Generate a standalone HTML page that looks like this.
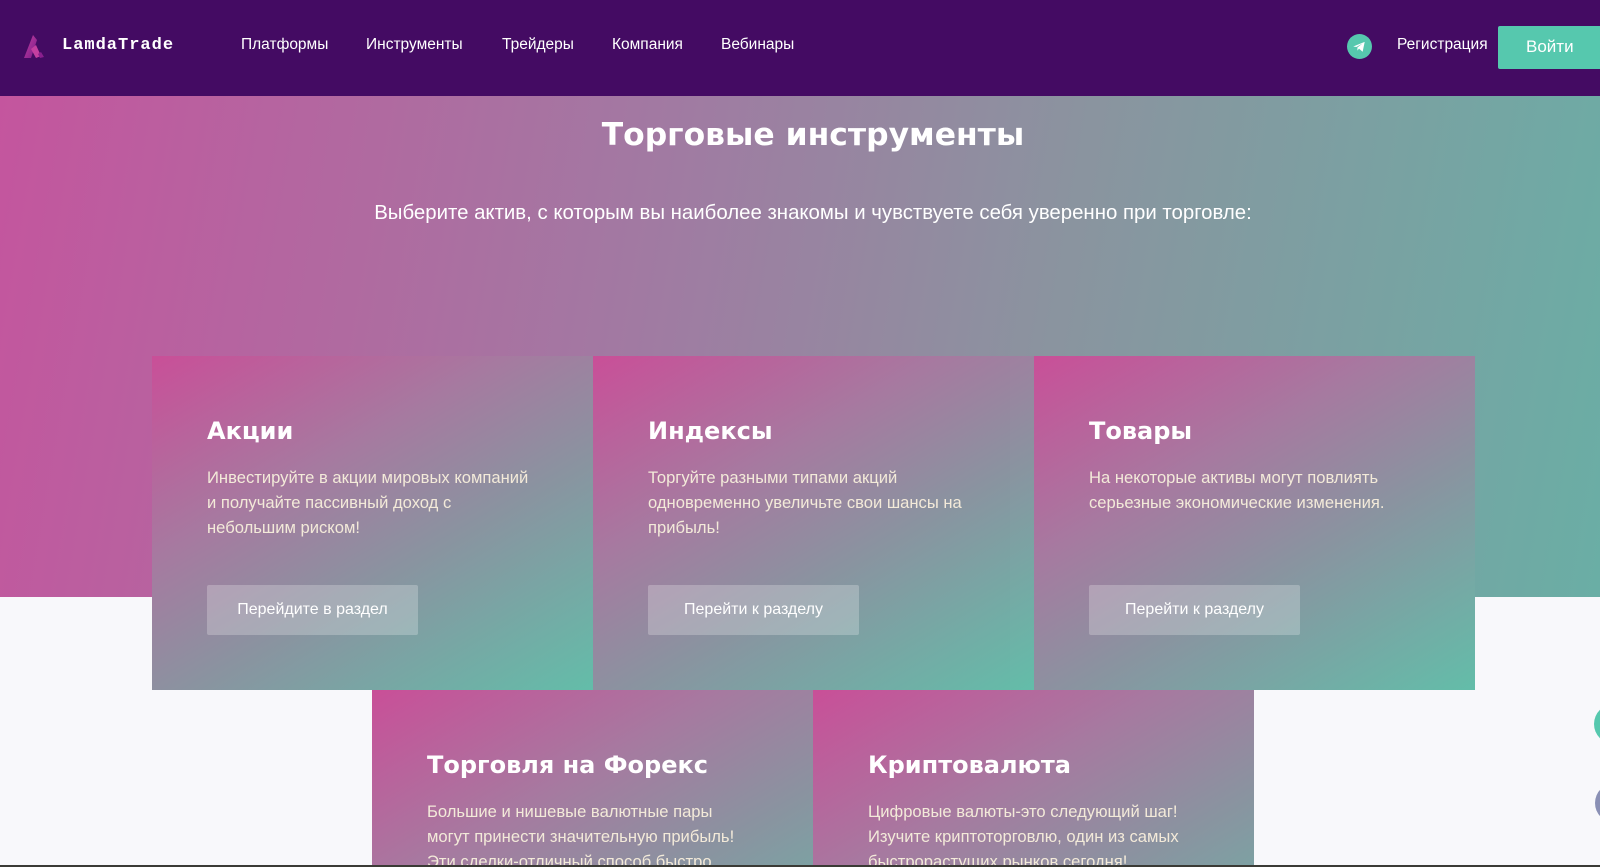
<!DOCTYPE html>
<html style="width:1600px;height:867px;overflow:hidden"><head><meta charset="utf-8"><style>
*{margin:0;padding:0;box-sizing:border-box}
body{width:1600px;height:867px;overflow:hidden;background:#f8f8fb;font-family:"Liberation Sans",sans-serif;position:relative}
.hdr{position:absolute;left:0;top:0;width:1600px;height:96px;background:#440b63}
.logo{position:absolute;left:22px;top:32px}
.brand{position:absolute;left:62px;top:36px;color:#fff;font-family:"Liberation Mono",monospace;font-weight:bold;font-size:17px;letter-spacing:1px}
.nav a{position:absolute;top:36px;color:#fff;font-size:15.5px;text-decoration:none}
.tg{position:absolute;left:1347px;top:34px;width:25px;height:25px;border-radius:50%;background:#56c8ae}
.reg{position:absolute;left:1397px;top:36px;color:#fff;font-size:15.5px}
.btn{position:absolute;left:1498px;top:26px;width:102px;height:43px;background:#56c8ae;border-radius:2px 0 0 2px;color:#fff;font-size:17px;line-height:41px;padding-left:28px}
.hero{position:absolute;left:0;top:96px;width:1600px;height:501px;background:linear-gradient(100deg,#c4559e 0%,#a17aa2 40%,#8a949f 65%,#6aaea5 100%)}
h1{position:absolute;top:117px;left:0;width:1626px;text-align:center;color:#fff;font-family:"DejaVu Sans",sans-serif;font-weight:bold;font-size:31.4px}
.sub{position:absolute;top:202px;left:0;width:1626px;text-align:center;color:#fff;font-size:20.4px}
.card{position:absolute;width:441px;height:334px;overflow:hidden;background:linear-gradient(150deg,#c94f98 0%,#a67aa0 35%,#8a93a0 60%,#63bda9 100%) 0 0/441px 334px no-repeat;color:#f3ead9}
.card h2{position:absolute;left:55px;top:61px;color:#fff;font-family:"DejaVu Sans",sans-serif;font-weight:bold;font-size:24px}
.card p{position:absolute;left:55px;top:109px;width:331px;font-size:16.6px;line-height:25px}
.card .b{position:absolute;left:55px;top:229px;width:211px;height:50px;background:rgba(255,255,255,.24);border-radius:2px;color:#fff;font-size:16px;line-height:50px;text-align:center}
.line{position:absolute;left:0;top:865px;width:1600px;height:2px;background:#3b3b36}
</style></head><body>
<div class="hdr">
<svg class="logo" width="28" height="28" viewBox="0 0 28 28"><defs><linearGradient id="g" x1="0" y1="0" x2="1" y2="1"><stop offset="0" stop-color="#c43fa0"/><stop offset="1" stop-color="#7a1a8a"/></linearGradient></defs><path d="M2 26 L11 3 L15 8 L9 26 Z" fill="url(#g)"/><path d="M9 17 L14 13 L19 24 L14 26 Z" fill="#c43fa0"/><path d="M16 22 L19 20 L22 25 L18 26Z" fill="#8a1f8e"/></svg>
<div class="brand">LamdaTrade</div>
<div class="nav"><a style="left:241px">Платформы</a><a style="left:366px">Инструменты</a><a style="left:502px">Трейдеры</a><a style="left:612px">Компания</a><a style="left:721px">Вебинары</a></div>
<div class="tg"><svg width="25" height="25" viewBox="0 0 24 24"><path d="M6 12 L17 7.5 L15 17 L11.5 14 L10 16 L10 13 L15 9 L9 12.5 Z" fill="#fff"/></svg></div>
<div class="reg">Регистрация</div>
<div class="btn">Войти</div>
</div>
<div class="hero"></div>
<h1>Торговые инструменты</h1>
<div class="sub">Выберите актив, с которым вы наиболее знакомы и чувствуете себя уверенно при торговле:</div>
<div class="card" style="left:152px;top:356px"><h2>Акции</h2><p>Инвестируйте в акции мировых компаний и получайте пассивный доход с небольшим риском!</p><div class="b">Перейдите в раздел</div></div>
<div class="card" style="left:593px;top:356px"><h2>Индексы</h2><p>Торгуйте разными типами акций одновременно увеличьте свои шансы на прибыль!</p><div class="b">Перейти к разделу</div></div>
<div class="card" style="left:1034px;top:356px"><h2>Товары</h2><p>На некоторые активы могут повлиять серьезные экономические изменения.</p><div class="b">Перейти к разделу</div></div>
<div class="card" style="left:372px;top:690px;height:175px"><h2>Торговля на Форекс</h2><p>Большие и нишевые валютные пары могут принести значительную прибыль! Эти сделки-отличный способ быстро</p></div>
<div class="card" style="left:813px;top:690px;height:175px"><h2>Криптовалюта</h2><p>Цифровые валюты-это следующий шаг! Изучите криптоторговлю, один из самых быстрорастущих рынков сегодня!</p></div>
<div style="position:absolute;left:1594px;top:704px;width:40px;height:40px;border-radius:50%;background:#56c8ae"></div>
<div style="position:absolute;left:1595px;top:783px;width:40px;height:40px;border-radius:50%;background:#8a90b5"></div>
<div class="line"></div>
</body></html>
